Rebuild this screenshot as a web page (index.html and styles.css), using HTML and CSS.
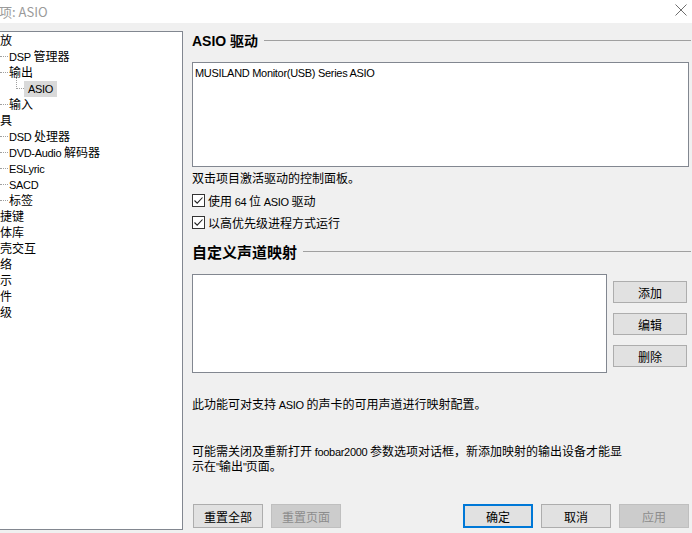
FILE: index.html
```html
<!DOCTYPE html>
<html lang="zh">
<head>
<meta charset="utf-8">
<title>foobar2000 参数选项: ASIO</title>
<link rel="stylesheet" href="styles.css">
</head>
<body>
<div class="titlebar">
  <span class="title">项: ASIO</span>
  <svg class="close" width="12" height="12" viewBox="0 0 12 12"><path d="M0.5 0.5 L11.5 11.5 M11.5 0.5 L0.5 11.5" stroke="#6e6e6e" stroke-width="1" fill="none"/></svg>
</div>
<div class="main">
  <div class="tree">
    <div class="row l0">播放</div>
    <div class="row l1"><span class="lat">DSP</span> 管理器</div>
    <div class="row l1">输出</div>
    <div class="row l2"><span class="sel lat">ASIO</span></div>
    <div class="row l1">输入</div>
    <div class="row l0">工具</div>
    <div class="row l1"><span class="lat">DSD</span> 处理器</div>
    <div class="row l1"><span class="lat">DVD-Audio</span> 解码器</div>
    <div class="row l1"><span class="lat">ESLyric</span></div>
    <div class="row l1"><span class="lat">SACD</span></div>
    <div class="row l1">标签</div>
    <div class="row l0">快捷键</div>
    <div class="row l0">媒体库</div>
    <div class="row l0">外壳交互</div>
    <div class="row l0">网络</div>
    <div class="row l0">显示</div>
    <div class="row l0">组件</div>
    <div class="row l0">高级</div>
  </div>
  <div class="page">
    <div class="group-h h1"><span class="gt">ASIO 驱动</span><span class="rule"></span></div>
    <div class="listbox lb1"><div class="item lat">MUSILAND Monitor(USB) Series ASIO</div></div>
    <div class="note">双击项目激活驱动的控制面板。</div>
    <div class="check first"><span class="box"><svg width="11" height="11" viewBox="0 0 11 11"><path d="M1.5 5.5 L4.2 8.2 L9.5 2.5" stroke="#222" stroke-width="1.1" fill="none"/></svg></span><span>使用 <span class="lat">64</span> 位 <span class="lat">ASIO</span> 驱动</span></div>
    <div class="check"><span class="box"><svg width="11" height="11" viewBox="0 0 11 11"><path d="M1.5 5.5 L4.2 8.2 L9.5 2.5" stroke="#222" stroke-width="1.1" fill="none"/></svg></span><span>以高优先级进程方式运行</span></div>
    <div class="group-h h2"><span class="gt">自定义声道映射</span><span class="rule"></span></div>
    <div class="map-row">
      <div class="listbox lb2"></div>
      <div class="side-btns">
        <button class="btn">添加</button>
        <button class="btn">编辑</button>
        <button class="btn">删除</button>
      </div>
    </div>
    <p class="desc1">此功能可对支持 <span class="lat">ASIO</span> 的声卡的可用声道进行映射配置。</p>
    <p class="desc2">可能需关闭及重新打开 <span class="lat">foobar2000</span> 参数选项对话框，新添加映射的输出设备才能显<br>示在<span class="q">"</span>输出<span class="q">"</span>页面。</p>
    <div class="footer">
      <button class="btn wide">重置全部</button>
      <button class="btn wide disabled">重置页面</button>
      <span class="spacer"></span>
      <button class="btn wide default">确定</button>
      <button class="btn wide">取消</button>
      <button class="btn wide disabled">应用</button>
    </div>
  </div>
</div>
</body>
</html>
```

FILE: styles.css
```css
* { box-sizing: border-box; }
html, body {
  margin: 0;
  padding: 0;
  width: 692px;
  height: 533px;
  overflow: hidden;
  background: #f0f0f0;
  font-family: "Noto Sans CJK SC", "Liberation Sans", sans-serif;
  font-size: 12px;
  color: #000;
}
.lat {
  font-family: "Liberation Sans", "Noto Sans CJK SC", sans-serif;
  font-size: 11px;
  letter-spacing: -0.3px;
}
.q {
  font-family: "Liberation Sans", sans-serif;
  font-size: 11px;
  letter-spacing: -1px;
}

.titlebar {
  height: 23px;
  background: #fff;
  display: flex;
  align-items: center;
  justify-content: space-between;
  padding-right: 5px;
}
.title {
  font-size: 13px;
  color: #9a9a9a;
  line-height: 20px;
  margin-left: -1px;
}
.close { margin-top: -3px; }

.main {
  display: flex;
  height: 510px;
  padding-top: 8px;
}

.tree {
  width: 183px;
  height: 499px;
  background: #fff;
  border: 1px solid #828790;
  border-left: none;
  overflow: hidden;
  flex: none;
}
.row {
  position: relative;
  height: 16px;
  line-height: 16px;
  white-space: nowrap;
}
.l0 { padding-left: 0; margin-left: -12px; }
.l1 { padding-left: 9px; }
.l1::before {
  content: "";
  position: absolute;
  left: 0;
  top: 8px;
  width: 8px;
  border-top: 1px dotted #a0a0a0;
}
.l2 { padding-left: 24px; }
.l2::before {
  content: "";
  position: absolute;
  left: 16px;
  top: -8px;
  height: 16px;
  width: 7px;
  border-left: 1px dotted #a0a0a0;
  border-bottom: 1px dotted #a0a0a0;
}
.sel {
  display: inline-block;
  background: #d9d9d9;
  padding: 0 4px;
  height: 16px;
  line-height: 16px;
}

.page {
  flex: 1;
  margin-left: 9px;
  display: flex;
  flex-direction: column;
  padding-right: 3px;
}
.group-h {
  display: flex;
  align-items: center;
  font-weight: bold;
}
.h1 { height: 18px; font-size: 14px; }
.h1 .gt { font-family: "Liberation Sans", "Noto Sans CJK SC", sans-serif; }
.h2 { height: 20px; font-size: 15px; margin-top: 8px; }
.rule {
  flex: 1;
  height: 1px;
  background: #a0a0a0;
  margin-left: 6px;
  margin-right: -2px;
}
.listbox {
  background: #fff;
  border: 1px solid #828790;
}
.lb1 {
  margin-top: 13px;
  height: 105px;
}
.item {
  padding: 2px 2px;
  line-height: 16px;
}
.note {
  margin-top: 3px;
  line-height: 16px;
}
.check {
  height: 22px;
  display: flex;
  align-items: center;
  gap: 3px;
}
.check.first { margin-top: 3px; }
.box {
  width: 13px;
  height: 13px;
  border: 1px solid #333;
  background: #fff;
  display: flex;
  align-items: center;
  justify-content: center;
}
.map-row {
  display: flex;
  margin-top: 13px;
}
.lb2 {
  width: 415px;
  height: 99px;
}
.side-btns {
  margin-left: 6px;
  padding-top: 7px;
  display: flex;
  flex-direction: column;
  gap: 10px;
}
.btn {
  width: 74px;
  height: 22px;
  background: #e1e1e1;
  border: 1px solid #adadad;
  font-family: "Noto Sans CJK SC", sans-serif;
  font-size: 12px;
  color: #000;
  padding: 0;
  margin: 0;
}
.btn.wide { width: 70px; height: 24px; }
.btn.disabled {
  background: #cccccc;
  border-color: #bfbfbf;
  color: #8c8c8c;
}
.btn.default { border: 2px solid #0078d7; }
.desc1 {
  margin: 23px 0 0;
  line-height: 16px;
}
.desc2 {
  margin: 31px 0 0;
  line-height: 14px;
}
.footer {
  margin-top: auto;
  margin-bottom: 5px;
  display: flex;
  gap: 8px;
  padding-left: 1px;
}
.spacer { flex: 1; }
```
